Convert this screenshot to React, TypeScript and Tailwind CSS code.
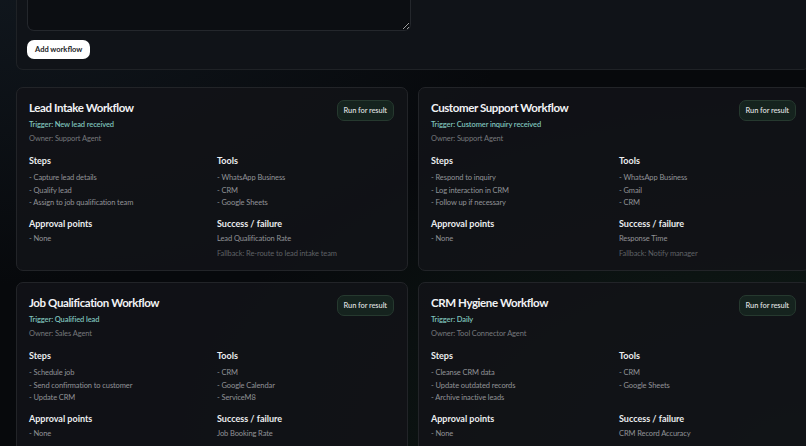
import React from "react";

interface Workflow {
  name: string;
  trigger: string;
  owner: string;
  steps: string[];
  tools: string[];
  approvals: string[];
  metric: string;
  fallback?: string;
}

const workflows: Workflow[] = [
  {
    name: "Lead Intake Workflow",
    trigger: "New lead received",
    owner: "Support Agent",
    steps: ["Capture lead details", "Qualify lead", "Assign to job qualification team"],
    tools: ["WhatsApp Business", "CRM", "Google Sheets"],
    approvals: ["None"],
    metric: "Lead Qualification Rate",
    fallback: "Re-route to lead intake team",
  },
  {
    name: "Customer Support Workflow",
    trigger: "Customer inquiry received",
    owner: "Support Agent",
    steps: ["Respond to inquiry", "Log interaction in CRM", "Follow up if necessary"],
    tools: ["WhatsApp Business", "Gmail", "CRM"],
    approvals: ["None"],
    metric: "Response Time",
    fallback: "Notify manager",
  },
  {
    name: "Job Qualification Workflow",
    trigger: "Qualified lead",
    owner: "Sales Agent",
    steps: ["Schedule job", "Send confirmation to customer", "Update CRM"],
    tools: ["CRM", "Google Calendar", "ServiceM8"],
    approvals: ["None"],
    metric: "Job Booking Rate",
  },
  {
    name: "CRM Hygiene Workflow",
    trigger: "Daily",
    owner: "Tool Connector Agent",
    steps: ["Cleanse CRM data", "Update outdated records", "Archive inactive leads"],
    tools: ["CRM", "Google Sheets"],
    approvals: ["None"],
    metric: "CRM Record Accuracy",
  },
];

function ItemList({ items, tight }: { items: string[]; tight?: boolean }) {
  return (
    <ul className={tight ? "mt-[5px] flex flex-col gap-[2.5px]" : "mt-[7px] flex flex-col gap-[2.5px]"}>
      {items.map((item) => (
        <li key={item} className="text-[7.5px] leading-[10px] tracking-[-0.1px] text-[#919397]">
          - {item}
        </li>
      ))}
    </ul>
  );
}

function WorkflowCard({ wf }: { wf: Workflow }) {
  return (
    <div className="h-[184px] rounded-[7px] border border-[#222428] bg-[#121317]/90 px-[12px] pt-[12px]">
      <div className="flex items-start justify-between">
        <div>
          <h3 className="text-[11.5px] font-bold leading-[16px] tracking-[-0.4px] text-[#f2f3f5]">
            {wf.name}
          </h3>
          <p className="mt-[4px] text-[7.5px] leading-[10px] font-semibold tracking-[-0.1px] text-[#7fc3bd]">
            Trigger: {wf.trigger}
          </p>
          <p className="mt-[4px] text-[7.5px] leading-[10px] tracking-[-0.1px] text-[#76787c]">
            Owner: {wf.owner}
          </p>
        </div>
        <button className="mr-[1px] h-[21px] rounded-[7px] border border-[#26392f] bg-[#15231e] px-[6px] text-[7.5px] font-semibold tracking-[-0.1px] text-[#d9dcdc]">
          Run for result
        </button>
      </div>
      <div className="mt-[11px] grid grid-cols-2 gap-x-[10px]">
        <div>
          <h4 className="text-[9px] font-bold leading-[11px] text-[#eceef0]">Steps</h4>
          <ItemList items={wf.steps} />
        </div>
        <div>
          <h4 className="text-[9px] font-bold leading-[11px] text-[#eceef0]">Tools</h4>
          <ItemList items={wf.tools} />
        </div>
        <div className="mt-[10px]">
          <h4 className="text-[9px] font-bold leading-[11px] text-[#eceef0]">Approval points</h4>
          <ItemList items={wf.approvals} tight />
        </div>
        <div className="mt-[10px]">
          <h4 className="text-[9px] font-bold leading-[11px] text-[#eceef0]">Success / failure</h4>
          <p className="mt-[5px] text-[7.5px] leading-[10px] tracking-[-0.1px] text-[#919397]">{wf.metric}</p>
          {wf.fallback && (
            <p className="mt-[5px] text-[7.5px] leading-[10px] tracking-[-0.1px] text-[#5f6165]">
              Fallback: {wf.fallback}
            </p>
          )}
        </div>
      </div>
    </div>
  );
}

export default function App() {
  return (
    <div
      className="relative h-[446px] w-[806px] overflow-hidden bg-[#07090c]"
      style={{ fontFamily: "Lato, 'Noto Sans', sans-serif" }}
    >
      <div className="pointer-events-none absolute inset-0 bg-[radial-gradient(ellipse_at_100%_100%,rgba(30,60,40,0.45),transparent_55%)]" />
      <div className="pointer-events-none absolute inset-0 bg-[radial-gradient(ellipse_at_0%_0%,rgba(25,35,45,0.5),transparent_45%)]" />
      <div className="relative w-[810px] pl-[16px]">
        <div className="-mt-[20px] rounded-b-[7px] border border-t-0 border-[#1f2226] bg-[#101318] pb-[10px] pl-[10px]">
          <textarea className="block h-[51px] w-[384px] resize-y rounded-b-[7px] border border-t-0 border-[#24272c] bg-[#0c0e12] outline-none" />
          <button className="mt-[9px] h-[19px] rounded-[7px] bg-white px-[8px] text-[7.5px] font-bold text-[#1a1b1e]">
            Add workflow
          </button>
        </div>
        <div className="mt-[17px] grid grid-cols-[392px_392px] gap-x-[10px] gap-y-[11px]">
          {workflows.map((wf) => (
            <WorkflowCard key={wf.name} wf={wf} />
          ))}
        </div>
      </div>
    </div>
  );
}
